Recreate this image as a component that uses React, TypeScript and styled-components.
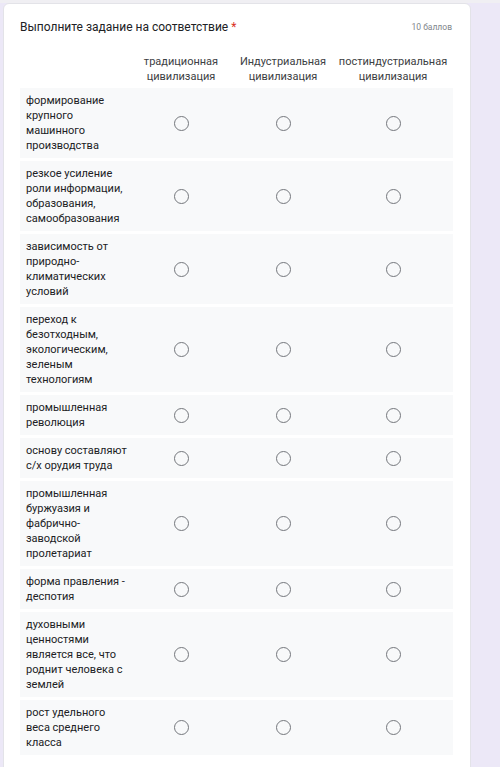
import React from "react";
import styled, { createGlobalStyle } from "styled-components";

const Global = createGlobalStyle`
  html, body { margin: 0; padding: 0; }
  body {
    background: #ece8f7;
    font-family: Roboto, "Noto Sans", Arial, sans-serif;
    color: #202124;
    -webkit-font-smoothing: antialiased;
  }
`;

const Page = styled.div`
  padding: 3px 29px 0 3px;
  background: linear-gradient(#f0eff3, #f0eff3) top / 100% 3px no-repeat, #ece8f7;
  min-height: 767px;
  box-sizing: border-box;
`;

const Card = styled.div`
  background: #ffffff;
  border: 1px solid #e3e3e8;
  border-radius: 6px;
  padding: 15px 17px 12px 16px;
  min-height: 780px;
  box-sizing: border-box;
`;

const TitleRow = styled.div`
  display: flex;
  justify-content: space-between;
  align-items: center;
  height: 16px;
`;

const Title = styled.div`
  font-size: 12px;
  line-height: 16px;
  color: #202124;
`;

const Star = styled.span`
  color: #d93025;
  margin-left: 3px;
`;

const Points = styled.div`
  font-size: 8.5px;
  color: #80868b;
  padding-right: 1px;
`;

const Table = styled.div`
  margin-top: 19px;
  display: flex;
  flex-direction: column;
  gap: 3px;
`;

const Row = styled.div<{ $header?: boolean }>`
  display: grid;
  grid-template-columns: 110px 102px 102px 118px;
  align-items: center;
  background: ${(p) => (p.$header ? "transparent" : "#f8f9fa")};
  font-size: 11px;
  line-height: 15px;
`;

const Label = styled.div`
  padding: 5px 3px 5px 6px;
  color: #202124;
`;

const HeadCell = styled.div`
  text-align: center;
  color: #3c4043;
  padding-bottom: 1px;
`;

const Cell = styled.div`
  display: flex;
  justify-content: center;
  align-items: center;
`;

const Radio = styled.span`
  width: 15px;
  height: 15px;
  box-sizing: border-box;
  border: 1.5px solid #74777c;
  border-radius: 50%;
  display: block;
`;

const columns = [
  "традиционная цивилизация",
  "Индустриальная цивилизация",
  "постиндустриальная цивилизация",
];

const rows = [
  "формирование крупного машинного производства",
  "резкое усиление роли информации, образования, самообразования",
  "зависимость от природно-климатических условий",
  "переход к безотходным, экологическим, зеленым технологиям",
  "промышленная революция",
  "основу составляют с/х орудия труда",
  "промышленная буржуазия и фабрично-заводской пролетариат",
  "форма правления - деспотия",
  "духовными ценностями является все, что роднит человека с землей",
  "рост удельного веса среднего класса",
];

export default function App() {
  return (
    <>
      <Global />
      <Page>
        <Card>
          <TitleRow>
            <Title>
              Выполните задание на соответствие<Star>*</Star>
            </Title>
            <Points>10 баллов</Points>
          </TitleRow>
          <Table>
            <Row $header>
              <div />
              <HeadCell>традиционная<br />цивилизация</HeadCell>
              <HeadCell>Индустриальная<br />цивилизация</HeadCell>
              <HeadCell>постиндустриальная<br />цивилизация</HeadCell>
            </Row>
            {rows.map((r) => (
              <Row key={r}>
                <Label>{r}</Label>
                {columns.map((c) => (
                  <Cell key={c}>
                    <Radio />
                  </Cell>
                ))}
              </Row>
            ))}
          </Table>
        </Card>
      </Page>
    </>
  );
}
